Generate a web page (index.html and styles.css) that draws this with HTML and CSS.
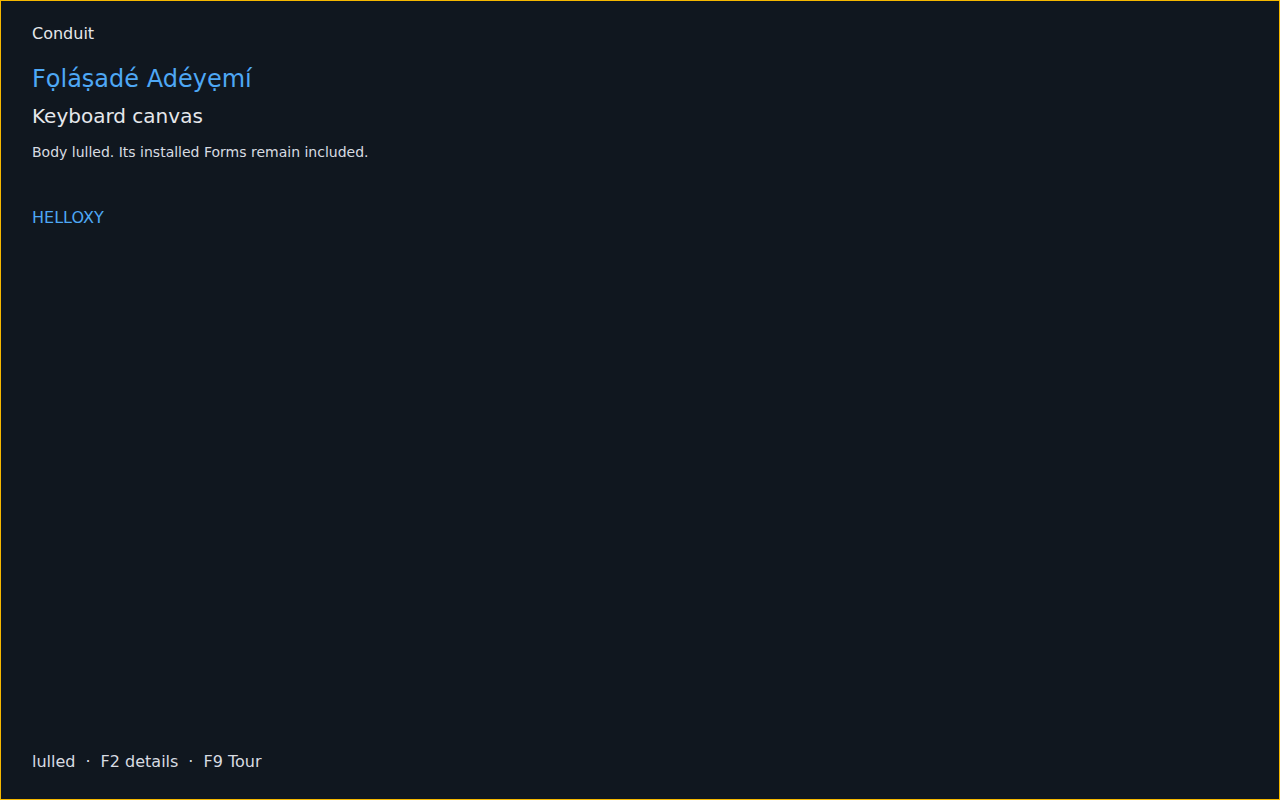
FILE: index.html
```html
<!DOCTYPE html>
<html lang="en">
<head>
  <meta charset="UTF-8" />
  <meta name="viewport" content="width=device-width, initial-scale=1.0" />
  <title>Conduit</title>
  <link rel="stylesheet" href="styles.css">
</head>
<body>
  <div class="screen">
    <header>
      <div class="app-name">Conduit</div>
      <h1 class="user">Fọláṣadé Adéyẹmí</h1>
      <h2 class="mode">Keyboard canvas</h2>
      <p class="status">Body lulled. Its installed Forms remain included.</p>
    </header>

    <main>
      <div class="word">HELLOXY</div>
    </main>

    <footer>
      <span>lulled</span>
      <span class="sep">·</span>
      <span>F2 details</span>
      <span class="sep">·</span>
      <span>F9 Tour</span>
    </footer>
  </div>
</body>
</html>
```

FILE: styles.css
```css
html, body { margin: 0; height: 100%; }
body {
  background: #10171f;
  color: #e5e7eb;
  font-family: "DejaVu Sans", sans-serif;
}
.screen {
  box-sizing: border-box;
  height: 100vh;
  border: 1px solid #f5b800;
  padding: 23px 31px 27px;
  display: flex;
  flex-direction: column;
}
.app-name { font-size: 16px; line-height: 20px; }
.user {
  margin: 20px 0 0;
  font-size: 24px;
  font-weight: normal;
  line-height: 30px;
  color: #4ea8f5;
}
.mode {
  margin: 10px 0 0;
  font-size: 20px;
  font-weight: normal;
  line-height: 24px;
}
.status {
  margin: 14px 0 0;
  font-size: 14px;
  line-height: 20px;
  color: #d8dce2;
}
main { flex: 1; padding-top: 46px; }
.word { font-size: 16px; line-height: 20px; color: #4ea8f5; }
footer {
  font-size: 16px;
  line-height: 20px;
  display: flex;
  gap: 10px;
  color: #d8dce2;
}
```
